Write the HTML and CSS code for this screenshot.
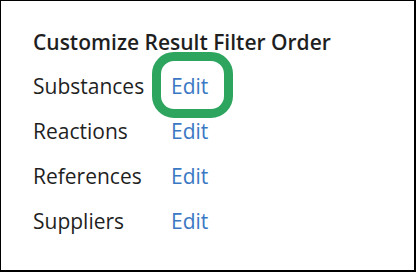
FILE: index.html
```html
<!DOCTYPE html>
<html>
<head>
<meta charset="utf-8">
<link rel="stylesheet" href="styles.css">
</head>
<body>
<div class="panel">
  <h2 class="title">Customize Result Filter Order</h2>
  <div class="row"><span class="label">Substances</span><a class="edit highlighted">Edit</a></div>
  <div class="row"><span class="label">Reactions</span><a class="edit">Edit</a></div>
  <div class="row"><span class="label">References</span><a class="edit">Edit</a></div>
  <div class="row"><span class="label">Suppliers</span><a class="edit">Edit</a></div>
</div>
</body>
</html>
```
FILE: styles.css
```css
html, body { margin: 0; padding: 0; background: #fff; }
.panel {
  box-sizing: border-box;
  width: 416px;
  height: 272px;
  border-style: solid;
  border-color: #000;
  border-width: 1px 2px 2px 1px;
  padding: 23px 0 0 32px;
  font-family: "Open Sans", sans-serif;
  color: #1f1f1f;
}
.title {
  margin: 0 0 3px 0;
  font-size: 21px;
  font-weight: 600;
  line-height: 36px;
}
.row {
  display: flex;
  height: 45px;
  align-items: center;
  font-size: 21px;
  line-height: 28px;
}
.label { width: 138px; }
.edit { color: #3b78c4; position: relative; }
.highlighted::after {
  content: "";
  position: absolute;
  left: -19px;
  top: -20px;
  width: 63px;
  height: 48px;
  border: 9px solid #2ea55e;
  border-radius: 22px;
}
```
